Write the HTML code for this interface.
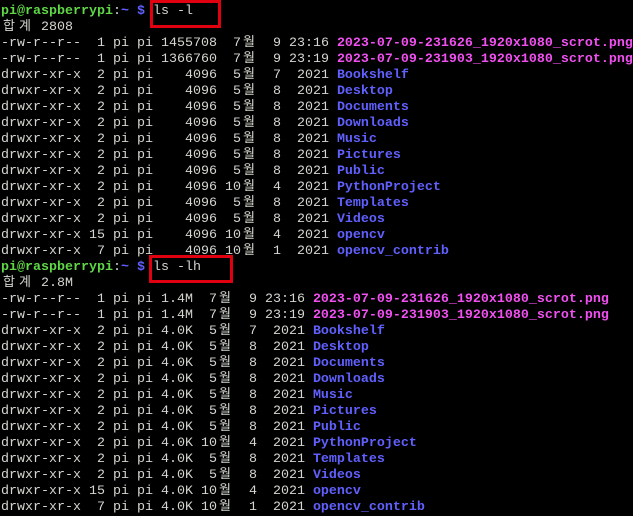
<!DOCTYPE html><html><head><meta charset="utf-8"><style>
html,body{margin:0;padding:0;background:#000;width:633px;height:516px;overflow:hidden}
pre{margin:0;padding:4px 0 0 1px;font-family:"Liberation Mono","DejaVu Sans Mono","Noto Sans CJK KR",monospace;font-size:13.33px;line-height:16px;color:#d3d7cf;white-space:pre}
.g{color:#5fd746;font-weight:bold}.b{color:#6060ff;font-weight:bold}.m{color:#f050f0;font-weight:bold}
.k{display:inline-block;width:16px;height:16px;font-family:"Noto Sans CJK KR",sans-serif;font-size:13px;line-height:16px;vertical-align:top;position:relative;top:-3px;text-align:center}
.box{position:absolute;border:3px solid #e00010}
</style></head><body>
<pre><span class="g">pi@raspberrypi</span><span style="color:#d3d7cf">:</span><span class="b">~ $</span> ls -l
<span class="k">합</span><span class="k">계</span> 2808
-rw-r--r--  1 pi pi 1455708  7<span class="k">월</span>  9 23:16 <span class="m">2023-07-09-231626_1920x1080_scrot.png</span>
-rw-r--r--  1 pi pi 1366760  7<span class="k">월</span>  9 23:19 <span class="m">2023-07-09-231903_1920x1080_scrot.png</span>
drwxr-xr-x  2 pi pi    4096  5<span class="k">월</span>  7  2021 <span class="b">Bookshelf</span>
drwxr-xr-x  2 pi pi    4096  5<span class="k">월</span>  8  2021 <span class="b">Desktop</span>
drwxr-xr-x  2 pi pi    4096  5<span class="k">월</span>  8  2021 <span class="b">Documents</span>
drwxr-xr-x  2 pi pi    4096  5<span class="k">월</span>  8  2021 <span class="b">Downloads</span>
drwxr-xr-x  2 pi pi    4096  5<span class="k">월</span>  8  2021 <span class="b">Music</span>
drwxr-xr-x  2 pi pi    4096  5<span class="k">월</span>  8  2021 <span class="b">Pictures</span>
drwxr-xr-x  2 pi pi    4096  5<span class="k">월</span>  8  2021 <span class="b">Public</span>
drwxr-xr-x  2 pi pi    4096 10<span class="k">월</span>  4  2021 <span class="b">PythonProject</span>
drwxr-xr-x  2 pi pi    4096  5<span class="k">월</span>  8  2021 <span class="b">Templates</span>
drwxr-xr-x  2 pi pi    4096  5<span class="k">월</span>  8  2021 <span class="b">Videos</span>
drwxr-xr-x 15 pi pi    4096 10<span class="k">월</span>  4  2021 <span class="b">opencv</span>
drwxr-xr-x  7 pi pi    4096 10<span class="k">월</span>  1  2021 <span class="b">opencv_contrib</span>
<span class="g">pi@raspberrypi</span>:<span class="b">~ $</span> ls -lh
<span class="k">합</span><span class="k">계</span> 2.8M
-rw-r--r--  1 pi pi 1.4M  7<span class="k">월</span>  9 23:16 <span class="m">2023-07-09-231626_1920x1080_scrot.png</span>
-rw-r--r--  1 pi pi 1.4M  7<span class="k">월</span>  9 23:19 <span class="m">2023-07-09-231903_1920x1080_scrot.png</span>
drwxr-xr-x  2 pi pi 4.0K  5<span class="k">월</span>  7  2021 <span class="b">Bookshelf</span>
drwxr-xr-x  2 pi pi 4.0K  5<span class="k">월</span>  8  2021 <span class="b">Desktop</span>
drwxr-xr-x  2 pi pi 4.0K  5<span class="k">월</span>  8  2021 <span class="b">Documents</span>
drwxr-xr-x  2 pi pi 4.0K  5<span class="k">월</span>  8  2021 <span class="b">Downloads</span>
drwxr-xr-x  2 pi pi 4.0K  5<span class="k">월</span>  8  2021 <span class="b">Music</span>
drwxr-xr-x  2 pi pi 4.0K  5<span class="k">월</span>  8  2021 <span class="b">Pictures</span>
drwxr-xr-x  2 pi pi 4.0K  5<span class="k">월</span>  8  2021 <span class="b">Public</span>
drwxr-xr-x  2 pi pi 4.0K 10<span class="k">월</span>  4  2021 <span class="b">PythonProject</span>
drwxr-xr-x  2 pi pi 4.0K  5<span class="k">월</span>  8  2021 <span class="b">Templates</span>
drwxr-xr-x  2 pi pi 4.0K  5<span class="k">월</span>  8  2021 <span class="b">Videos</span>
drwxr-xr-x 15 pi pi 4.0K 10<span class="k">월</span>  4  2021 <span class="b">opencv</span>
drwxr-xr-x  7 pi pi 4.0K 10<span class="k">월</span>  1  2021 <span class="b">opencv_contrib</span></pre>
<div class="box" style="left:150px;top:0;width:65px;height:22px"></div>
<div class="box" style="left:149px;top:255px;width:78px;height:22px"></div>
</body></html>
